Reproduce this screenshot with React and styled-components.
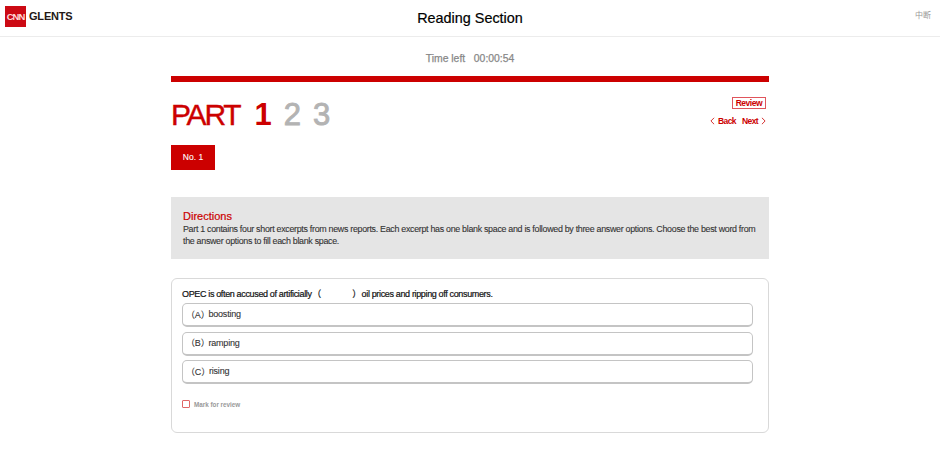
import React from 'react';
import styled, { createGlobalStyle } from 'styled-components';

const OPTIONS = [
    { key: 'A', text: 'boosting' },
    { key: 'B', text: 'ramping' },
    { key: 'C', text: 'rising' },
];

function App() {
    return (
        <Page>
            <GlobalStyles />
            <Header>
                <Brand>
                    <LogoBox>CNN</LogoBox>
                    <BrandName>GLENTS</BrandName>
                </Brand>
                <Title>Reading Section</Title>
                <Suspend>中断</Suspend>
            </Header>
            <Main>
                <Timer>Time left&nbsp;&nbsp; 00:00:54</Timer>
                <Progress />
                <PartRow>
                    <Parts>
                        <PartLabel>PART</PartLabel>
                        <PartNumber $active>1</PartNumber>
                        <PartNumber>2</PartNumber>
                        <PartNumber>3</PartNumber>
                    </Parts>
                    <Controls>
                        <ReviewButton>Review</ReviewButton>
                        <NavRow>
                            <NavLink>
                                <Chevron viewBox="0 0 6 10"><path d="M5 1 1 5l4 4" /></Chevron>
                                Back
                            </NavLink>
                            <NavLink>
                                Next
                                <Chevron viewBox="0 0 6 10"><path d="M1 1l4 4-4 4" /></Chevron>
                            </NavLink>
                        </NavRow>
                    </Controls>
                </PartRow>
                <NumberTab>No. 1</NumberTab>
                <Directions>
                    <DirectionsTitle>Directions</DirectionsTitle>
                    <DirectionsText>
                        Part 1 contains four short excerpts from news reports. Each excerpt has one blank space and is followed by three answer options. Choose the best word from the answer options to fill each blank space.
                    </DirectionsText>
                </Directions>
                <QuestionCard>
                    <Question>
                        OPEC is often accused of artificially<Blank>（</Blank><BlankGap /><Blank>）</Blank>oil prices and ripping off consumers.
                    </Question>
                    <OptionList>
                        {OPTIONS.map(option => (
                            <Option key={option.key}>
                                <OptionKey>（{option.key}）</OptionKey>{option.text}
                            </Option>
                        ))}
                    </OptionList>
                    <MarkRow>
                        <MarkBox />
                        Mark for review
                    </MarkRow>
                </QuestionCard>
            </Main>
        </Page>
    );
}

export default App;

/**
 * 
 */

const GlobalStyles = createGlobalStyle`
    html, body {
        margin     : 0;
        padding    : 0;
        background : #fff;
    }

    body {
        font-family : "Liberation Sans", "Noto Sans CJK SC", Arial, sans-serif;
    }
`

const Page = styled.div`
    width    : 940px;
    height   : 471px;
    overflow : hidden;
`

const Header = styled.header`
    position        : relative;
    display         : flex;
    justify-content : center;
    align-items     : center;
    height          : 36px;
    border-bottom   : 1px solid #ececec;
`

const Brand = styled.div`
    position    : absolute;
    top         : 6px;
    left        : 5px;
    display     : flex;
    align-items : center;
    gap         : 3px;
`

const LogoBox = styled.div`
    display         : flex;
    justify-content : center;
    align-items     : center;
    width           : 21px;
    height          : 21px;
    background      : #cc0a14;
    color           : #ffd9d9;
    font-size       : 9.5px;
    font-weight     : 700;
    letter-spacing  : -1px;
`

const BrandName = styled.span`
    position       : relative;
    top            : -1px;
    color          : #231815;
    font-size      : 11px;
    font-weight    : 700;
    letter-spacing : -0.2px;
`

const Title = styled.h1`
    margin      : 0 0 1px;
    color       : #000;
    font-size   : 14.4px;
    font-weight : 400;
    -webkit-text-stroke : 0.2px #000;
`

const Suspend = styled.span`
    position  : absolute;
    top       : 9px;
    right     : 9px;
    color     : #999;
    font-size : 8px;
`

const Main = styled.main`
    width  : 598px;
    margin : 0 auto;
`

const Timer = styled.div`
    margin-top  : 15px;
    color       : #888;
    font-size   : 10.4px;
    line-height : 13px;
    text-align  : center;
    -webkit-text-stroke : 0.25px #888;
`

const Progress = styled.div`
    height     : 6px;
    margin-top : 11px;
    background : #cc0000;
`

const PartRow = styled.div`
    display         : flex;
    justify-content : space-between;
    align-items     : flex-start;
    margin-top      : 15px;
`

const Parts = styled.div`
    display     : flex;
    align-items : baseline;
    height      : 41px;
`

const PartLabel = styled.span`
    margin-right   : 15px;
    color          : #cc0000;
    font-size      : 30px;
    letter-spacing : -2.2px;
    line-height    : 36px;
    -webkit-text-stroke : 0.4px #cc0000;
`

const PartNumber = styled.span`
    margin-right : 12px;
    color        : ${props => props.$active ? '#cc0000' : '#b3b3b3'};
    font-size    : 31px;
    font-weight  : ${props => props.$active ? 700 : 400};
    line-height  : 36px;
    -webkit-text-stroke : ${props => props.$active ? '0' : '0.9px #b3b3b3'};
`

const Controls = styled.div`
    display        : flex;
    flex-direction : column;
    align-items    : flex-end;
    margin-right   : 3px;
`

const ReviewButton = styled.div`
    padding        : 0 3px;
    border         : 1px solid #e0555c;
    color          : #cc0000;
    font-size      : 8.5px;
    font-weight    : 700;
    letter-spacing : -0.5px;
    line-height    : 10px;
`

const NavRow = styled.div`
    display    : flex;
    gap        : 6px;
    margin-top : 7px;
`

const NavLink = styled.div`
    display        : flex;
    align-items    : center;
    gap            : 3px;
    color          : #cc0000;
    font-size      : 8.5px;
    font-weight    : 700;
    letter-spacing : -0.6px;
    line-height    : 10px;
`

const Chevron = styled.svg`
    width        : 5px;
    height       : 8px;
    fill         : none;
    stroke       : #cc0000;
    stroke-width : 1;
`

const NumberTab = styled.div`
    width       : 44px;
    height      : 25px;
    margin-top  : 7px;
    background  : #cc0000;
    color       : #fff;
    font-size   : 8.5px;
    line-height : 25px;
    text-align  : center;
    -webkit-text-stroke : 0.1px #fff;
`

const Directions = styled.section`
    height     : 62px;
    box-sizing : border-box;
    margin-top : 27px;
    padding    : 13px 10px 0 12px;
    background : #e5e5e5;
`

const DirectionsTitle = styled.div`
    color       : #cc0000;
    font-size   : 11px;
    line-height : 13px;
    -webkit-text-stroke : 0.2px #cc0000;
`

const DirectionsText = styled.p`
    margin         : 0;
    color          : #333;
    font-size      : 8.9px;
    letter-spacing : -0.3px;
    line-height    : 12px;
    -webkit-text-stroke : 0.1px #333;
`

const QuestionCard = styled.section`
    height        : 155px;
    box-sizing    : border-box;
    margin-top    : 19px;
    padding       : 10px 15px 0 10px;
    border        : 1px solid #d9d9d9;
    border-radius : 6px;
`

const Question = styled.div`
    display        : flex;
    align-items    : center;
    color          : #111;
    font-size      : 9px;
    letter-spacing : -0.35px;
    line-height    : 11px;
    -webkit-text-stroke : 0.2px #111;
`

const Blank = styled.span`
    width      : 10px;
    text-align : center;
`

const BlankGap = styled.span`
    width : 30px;
`

const OptionList = styled.div`
    display        : flex;
    flex-direction : column;
    gap            : 4.5px;
    margin-top     : 3px;
`

const Option = styled.div`
    display        : flex;
    align-items    : center;
    height         : 24px;
    box-sizing     : border-box;
    padding        : 0 0 1px 3px;
    border         : 1px solid #c4c4c4;
    border-bottom  : 2px solid #c4c4c4;
    border-radius  : 5px;
    color          : #333;
    font-size      : 9px;
    letter-spacing : -0.2px;
    -webkit-text-stroke : 0.1px #333;
`

const OptionKey = styled.span`
    margin-right : -1px;
`

const MarkRow = styled.div`
    display     : flex;
    align-items : center;
    gap         : 4px;
    margin-top  : 16px;
    color       : #999;
    font-size   : 6.3px;
    font-weight : 700;
`

const MarkBox = styled.span`
    width         : 6px;
    height        : 6px;
    border        : 1px solid #e06666;
    border-radius : 1px;
`
